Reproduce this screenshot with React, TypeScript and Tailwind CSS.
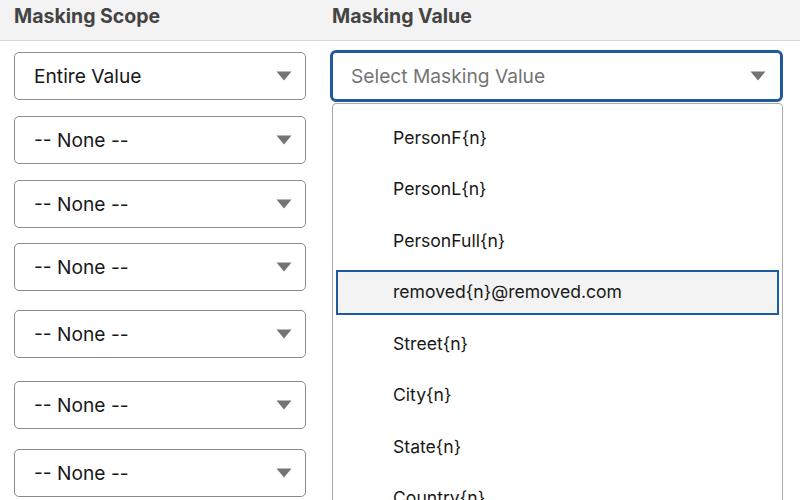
import React from "react";

const Arrow = ({ className = "" }: { className?: string }) => (
  <svg width="16" height="10" viewBox="0 0 16 10" className={className}>
    <path d="M0.5 0.5 L15.5 0.5 L8 9.5 Z" fill="#747474" />
  </svg>
);

const scopeRows = [
  { label: "Entire Value", mt: "mt-0" },
  { label: "-- None --", mt: "mt-[16px]" },
  { label: "-- None --", mt: "mt-[16px]" },
  { label: "-- None --", mt: "mt-[15px]" },
  { label: "-- None --", mt: "mt-[19px]" },
  { label: "-- None --", mt: "mt-[23px]" },
  { label: "-- None --", mt: "mt-[20px]" },
];

const options = [
  "PersonF{n}",
  "PersonL{n}",
  "PersonFull{n}",
  "removed{n}@removed.com",
  "Street{n}",
  "City{n}",
  "State{n}",
  "Country{n}",
];

export default function App() {
  return (
    <div
      className="relative w-[800px] h-[500px] overflow-hidden bg-white text-[#181818]"
      style={{ fontFamily: "Inter, 'Noto Sans', Roboto, sans-serif" }}
    >
      <div className="flex h-[41px] items-start pt-[4px] bg-[#f3f3f3] border-b border-[#d8d8d8]">
        <div className="w-[332px] pl-[14px] text-[19.5px] leading-[24px] font-bold text-[#444444]">Masking Scope</div>
        <div className="text-[19.5px] leading-[24px] font-bold text-[#444444]">Masking Value</div>
      </div>
      <div className="flex pt-[11px]">
        <div className="w-[316px] pl-[14px] flex flex-col">
          {scopeRows.map((r, i) => (
            <div
              key={i}
              className={`${r.mt} w-[292px] h-[48px] flex items-center justify-between pl-[19px] pr-[13px] border border-[#8c8c8c] rounded-[5px] bg-white text-[19.2px]`}
            >
              <span>{r.label}</span>
              <Arrow />
            </div>
          ))}
        </div>
        <div className="ml-[14px] -mt-[2px]">
          <div className="w-[453px] h-[52px] flex items-center justify-between pl-[18px] pr-[14px] border-[3px] border-[#1f5a9f] rounded-[6px] bg-white text-[19.2px] text-[#747474]">
            <span>Select Masking Value</span>
            <Arrow />
          </div>
        </div>
      </div>
      <div className="absolute left-[332px] top-[103px] w-[451px] h-[420px] bg-white border border-[#a9a9a9] rounded-[4px] pt-[8px] px-[3px]">
        {options.map((o, i) => (
          <div key={i} className="h-[51.5px] py-[3.5px]">
            <div
              className={`h-full flex items-center pl-[55px] text-[17.6px] ${
                i === 3 ? "border-2 border-[#1f5a9f] bg-[#f3f3f3]" : "border-2 border-transparent"
              }`}
            >
              {o}
            </div>
          </div>
        ))}
      </div>
    </div>
  );
}
